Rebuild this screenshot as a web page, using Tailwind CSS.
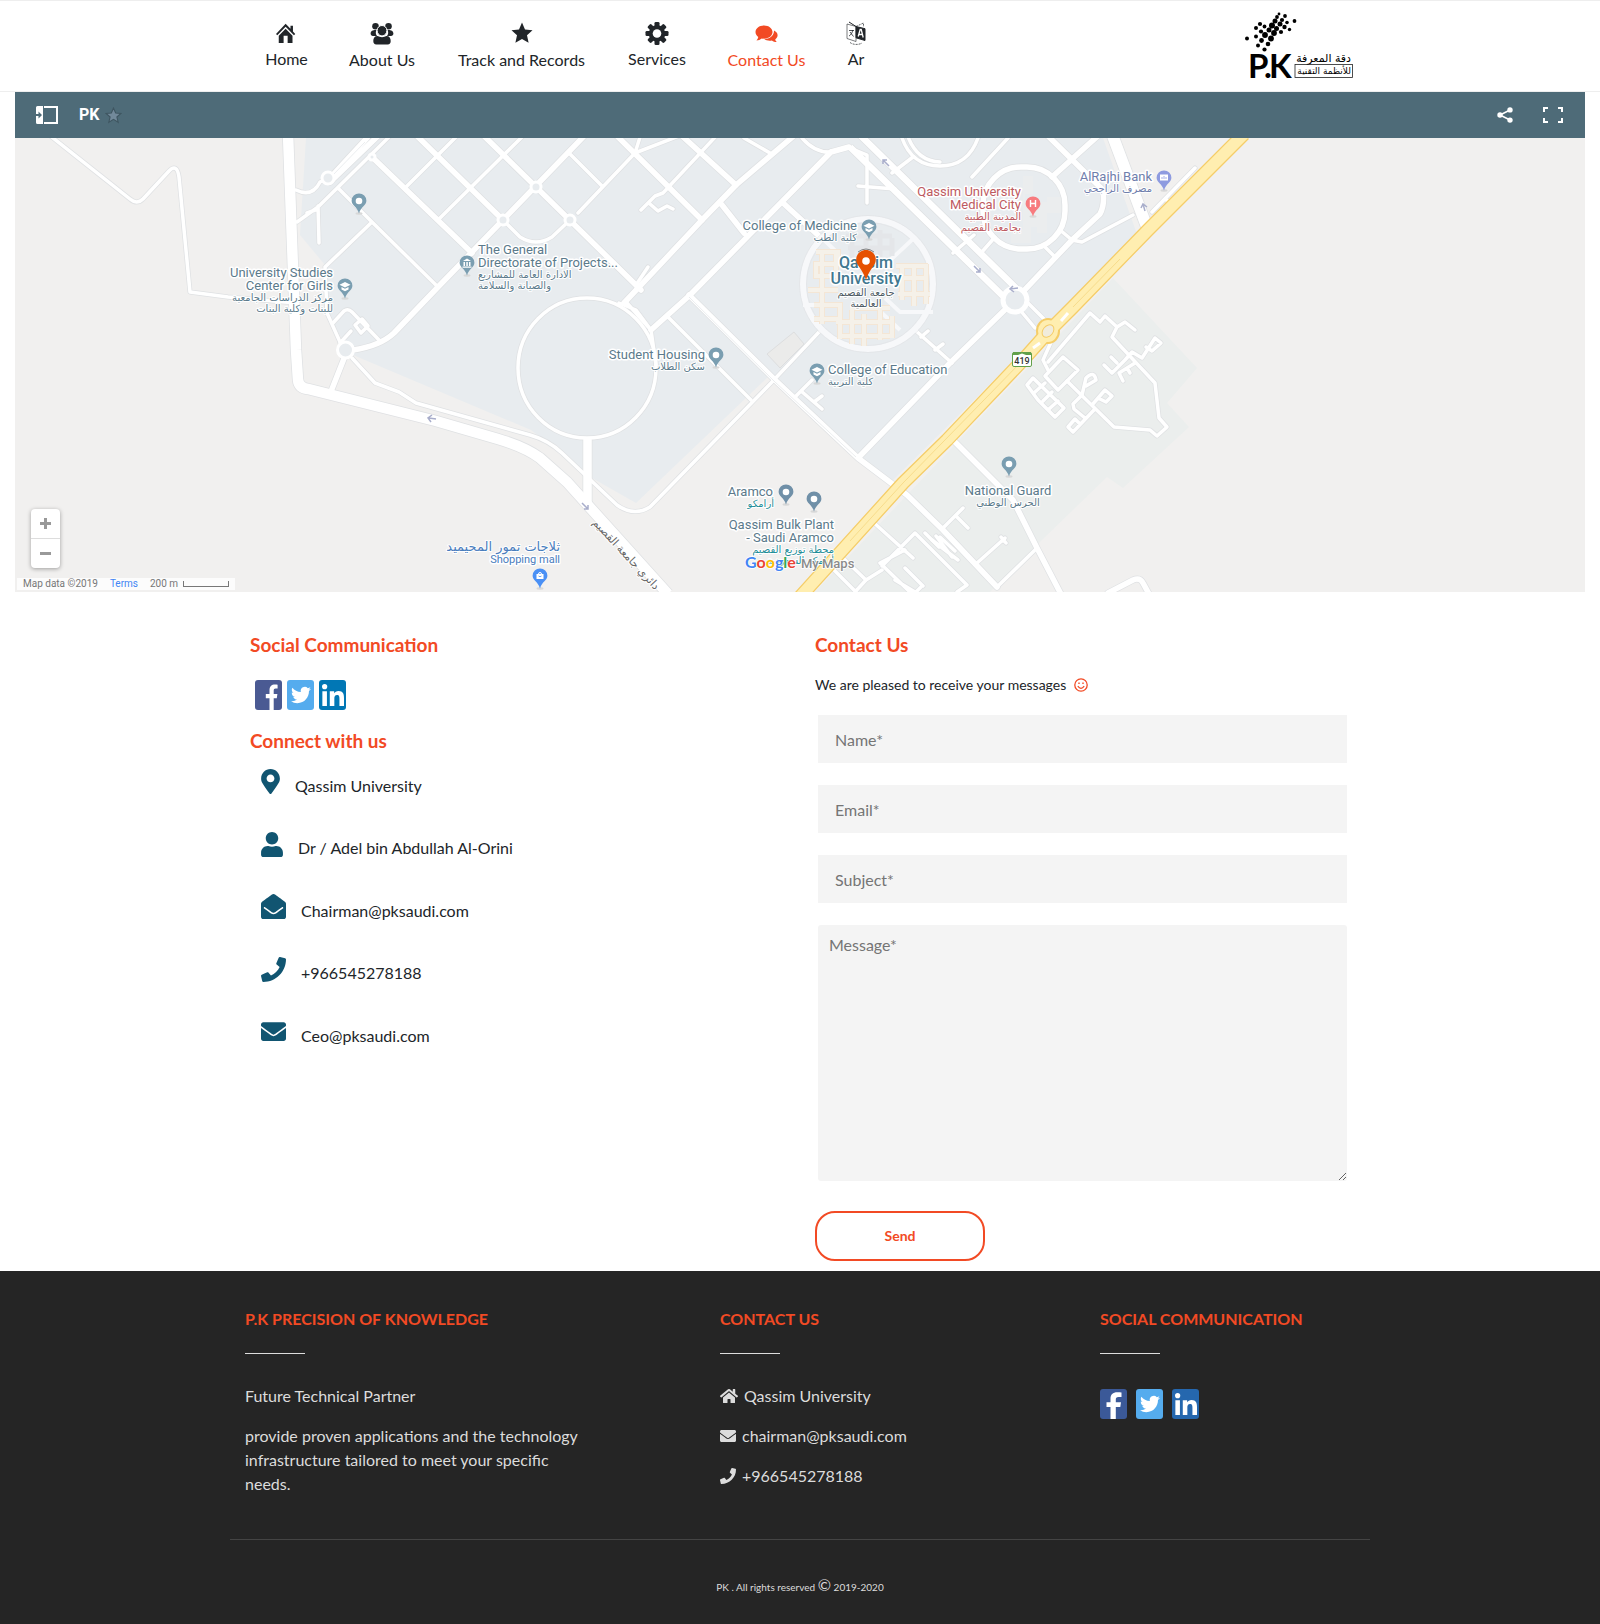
<!DOCTYPE html>
<html lang="en">
<head>
<meta charset="utf-8">
<meta name="viewport" content="width=device-width, initial-scale=1">
<title>PK - Contact Us</title>
<script src="https://cdn.jsdelivr.net/npm/@tailwindcss/browser@4"></script>
</head>
<body class="bg-white font-['Lato',sans-serif] text-base text-[#212529]">

<svg class="hidden" aria-hidden="true">
  <symbol id="i-envelope" viewBox="0 0 512 512"><path d="M502.3 190.8c3.9-3.1 9.7-.2 9.7 4.7V400c0 26.5-21.5 48-48 48H48c-26.5 0-48-21.5-48-48V195.6c0-5 5.7-7.8 9.7-4.7 22.4 17.4 52.1 39.5 154.1 113.6 21.1 15.4 56.7 47.8 92.2 47.6 35.7.3 72-32.8 92.3-47.6 102-74.1 131.6-96.3 154-113.7zM256 320c23.2.4 56.6-29.2 73.4-41.4 132.7-96.3 142.8-104.7 173.4-128.7 5.8-4.5 9.2-11.5 9.2-18.9v-19c0-26.5-21.5-48-48-48H48c-26.5 0-48 21.5-48 48v19c0 7.4 3.4 14.3 9.2 18.9 30.6 23.9 40.7 32.4 173.4 128.7 16.8 12.2 50.2 41.8 73.4 41.4z"/></symbol>
  <symbol id="i-phone" viewBox="0 0 512 512"><path d="M493.4 24.6l-104-24c-11.3-2.6-22.9 3.3-27.5 13.9l-48 112c-4.2 9.8-1.4 21.3 6.9 28l60.6 49.6c-36 76.7-98.9 140.5-177.2 177.2l-49.6-60.6c-6.8-8.3-18.2-11.1-28-6.9l-112 48C3.9 366.5-2 378.1.6 389.4l24 104C27.1 504.2 36.7 512 48 512c256.1 0 464-207.5 464-464 0-11.2-7.7-20.9-18.6-23.4z"/></symbol>
  <symbol id="i-fb" viewBox="0 0 27 30"><path d="M14.5 30V18.3h-3.7v-4.4h3.7v-3.6c0-3.9 2-5.8 5.6-5.8 1 0 1.900.1 2.500.2v3.900h-1.900c-1.500 0-2 .8-2 2v3.300h3.700l-.6 4.400h-3.100V30z"/></symbol>
  <symbol id="i-fb2" viewBox="0 0 27 30"><path d="M10.500 30V18h-4v-4.700h4v-3.500c0-4.300 2.300-6.500 6.800-6.500 1.700 0 3.200.1 4.200.3v4.300h-3c-2.200 0-2.700 1-2.700 2.700v2.700h5.200l-.7 4.700h-4.500V30z"/></symbol>
  <symbol id="i-tw" viewBox="0 0 24 24"><path d="M23.953 4.57a10 10 0 01-2.825.775 4.958 4.958 0 002.163-2.723c-.951.555-2.005.959-3.127 1.184a4.920 4.920 0 00-8.384 4.482C7.690 8.095 4.067 6.130 1.640 3.162a4.822 4.822 0 00-.666 2.475c0 1.710.870 3.213 2.188 4.096a4.904 4.904 0 01-2.228-.616v.060a4.923 4.923 0 003.946 4.827 4.996 4.996 0 01-2.212.085 4.936 4.936 0 004.604 3.417 9.867 9.867 0 01-6.102 2.105c-.390 0-.779-.023-1.170-.067a13.995 13.995 0 007.557 2.209c9.053 0 13.998-7.496 13.998-13.985 0-.210 0-.420-.015-.630A9.935 9.935 0 0024 4.590z"/></symbol>
  <symbol id="i-in" viewBox="0 0 448 448"><path d="M100.280 448H7.400V148.900h92.880zM53.790 108.100C24.090 108.100 0 83.500 0 53.800a53.790 53.790 0 0 1 107.580 0c0 29.700-24.100 54.300-53.790 54.300zM447.900 448h-92.680V302.400c0-34.700-.700-79.200-48.290-79.200-48.290 0-55.690 37.700-55.690 76.700V448h-92.780V148.900h89.080v40.800h1.300c12.400-23.500 42.690-48.300 87.880-48.300 94 0 111.280 61.900 111.280 142.300V448z"/></symbol>
  <symbol id="pin" viewBox="0 0 16 22"><ellipse cx="8" cy="20.500" rx="3.500" ry="1.200" fill="#d8d8d8"/><path d="M8 .5A7.300 7.300 0 0 0 .6 7.800C.6 12.500 6 13.500 8 20.500c2-7 7.400-8 7.400-12.700A7.300 7.300 0 0 0 8 .5z"/></symbol>
</svg>

<header class="border-y border-[#eee]">
  <div class="mx-auto flex h-[90px] max-w-[1140px] items-start justify-between pl-[15px] pr-[14px]">
    <nav aria-label="Main" class="flex pt-[20px] leading-6">
      <a href="#" class="flex min-w-[83px] flex-col items-center gap-[2px] px-5">
        <svg class="h-[24px] w-[22px]" viewBox="0 0 24 24" fill="currentColor"><path d="M10.500 2 0 13l1.400 1.500 9.100-9.300 9.100 9.300L21 13l-2.500-2.700V4h-2.700v3.400z"/><path d="M10.500 7.300 3 15v8h5.300v-8h4.400v8H18v-8z"/></svg>
        <span>Home</span></a>
      <a href="#" class="flex min-w-[108px] flex-col items-center gap-[2px] px-5">
        <svg class="h-[25px] w-[24px]" viewBox="0 0 24 25"><g fill="currentColor"><circle cx="5.500" cy="5.300" r="3.300"/><circle cx="18.500" cy="5.300" r="3.300"/><path d="M5.500 9C3 9 .6 10 .6 12.500c0 1.500.9 2.500 2.400 2.500h4C5.500 13 5.500 11 6.500 9zM18.500 9c2.500 0 4.900 1 4.900 3.500 0 1.500-.9 2.500-2.400 2.500h-4c1.500-2 1.500-4 .5-6z"/></g><path fill="currentColor" stroke="#fff" stroke-width="1" d="M12 4.500a4.900 4.900 0 0 0-4.900 5c0 2.600 2 5.500 4.900 5.500s4.900-2.900 4.900-5.500a4.900 4.900 0 0 0-4.900-5z"/><path fill="currentColor" d="M7.500 15C4.500 15 3.300 17 3.300 20c0 2 1 3.500 3 3.500h11.400c2 0 3-1.500 3-3.500 0-3-1.200-5-4.200-5-2.500 1.500-6.500 1.500-9 0z"/></svg>
        <span>About Us</span></a>
      <a href="#" class="flex min-w-[171px] flex-col items-center gap-[2px] px-5">
        <svg class="h-[25px] w-[22px]" viewBox="0 0 22 25" fill="currentColor"><path d="m11 1.500 3 7 7.500.8-5.500 5 1.600 7.500L11 18l-6.600 3.800L6 14.300l-5.500-5L8 8.500z"/></svg>
        <span>Track and Records</span></a>
      <a href="#" class="flex min-w-[100px] flex-col items-center gap-[2px] px-5">
        <svg class="h-[24px] w-[24px]" viewBox="0 0 24 24" fill="currentColor"><rect x="9.500" y="1" width="5" height="23" rx="1.300"/><rect x="9.500" y="1" width="5" height="23" rx="1.300" transform="rotate(45 12 12.500)"/><rect x="9.500" y="1" width="5" height="23" rx="1.300" transform="rotate(90 12 12.500)"/><rect x="9.500" y="1" width="5" height="23" rx="1.300" transform="rotate(135 12 12.500)"/><circle cx="12" cy="12.500" r="8.300"/><circle cx="12" cy="12.500" r="4.300" fill="#fff"/></svg>
        <span>Services</span></a>
      <a href="#" aria-current="page" class="flex min-w-[119px] flex-col items-center gap-[2px] px-5 text-[#f24a24]">
        <svg class="h-[25px] w-[23px]" viewBox="0 0 23 25" fill="currentColor"><path d="M9 4.500c4.900 0 8.500 2.900 8.500 6.600s-3.600 6.600-8.500 6.600c-.8 0-1.600-.1-2.300-.2-1.500 1.200-3.200 2-5.200 2 1-1 1.600-2.200 1.800-3.400C1.600 14.900.5 13.100.5 11.100.5 7.400 4.100 4.500 9 4.500z"/><path d="M19 9.500c2.200 1 3.600 2.700 3.600 4.800 0 1.700-1 3.100-2.400 4.100.2 1 .8 1.900 1.600 2.700-1.900 0-3.600-.6-4.900-1.600-3 .6-6-.1-7.600-1.500C14.500 18 19.200 14.500 19 9.500z"/></svg>
        <span>Contact Us</span></a>
      <a href="#" class="flex min-w-[57px] flex-col items-center gap-[2px] px-5">
        <svg class="h-[24px] w-[20px]" viewBox="0 0 20 24" fill="none" stroke="currentColor"><path d="m1 3 9 2.500v15L1 17.500z" stroke-width=".6"/><path d="M10 5.500 17.500 2v4M4 21.500c3 2.500 9 2.500 12 .5" stroke-width=".7" stroke-dasharray="2 1"/><path d="m10 5.500 9 2.200v11.800l-9-2.700z" fill="currentColor"/><path d="m3 1 7 4.500" stroke-width="1"/><path d="M3 9.500h5M6.700 9C6.500 11.500 5 14 3 15M4 11l3.500 4.500" stroke-width=".8"/><path d="m12.200 15.500 2-7h1l2 8M13 13.500h3.500" stroke="#fff" stroke-width="1.300"/></svg>
        <span>Ar</span></a>
    </nav>
    <a href="#" aria-label="PK home" class="mt-[10px] block">
      <svg class="h-[72px] w-[112px]" viewBox="1243 11 112 72" fill="#000">
        <g><circle cx="1278" cy="14" r="1.400"/><circle cx="1276" cy="17" r="1.900"/><circle cx="1284" cy="16" r="1.900"/><circle cx="1274" cy="21" r="2.500"/><circle cx="1281" cy="20" r="2.100"/><circle cx="1286" cy="22.500" r="1.800"/><circle cx="1293.500" cy="21" r="1.900"/><circle cx="1259" cy="24" r="2.100"/><circle cx="1271" cy="25.500" r="3"/><circle cx="1279" cy="24" r="2.500"/><circle cx="1263.500" cy="26.500" r="1.900"/><circle cx="1255" cy="28" r="2"/><circle cx="1268" cy="30" r="2.500"/><circle cx="1275.500" cy="28.500" r="2.500"/><circle cx="1283.500" cy="27" r="2.200"/><circle cx="1288.500" cy="29.500" r="1.700"/><circle cx="1260" cy="31.500" r="2.100"/><circle cx="1273" cy="33" r="2.900"/><circle cx="1280" cy="32" r="2.100"/><circle cx="1264" cy="35" r="2.900"/><circle cx="1255" cy="36.500" r="2"/><circle cx="1246" cy="38.500" r="2"/><circle cx="1270" cy="38.500" r="2.900"/><circle cx="1260.500" cy="40.500" r="2.400"/><circle cx="1267" cy="44" r="2.300"/><circle cx="1257" cy="45.500" r="2"/><circle cx="1263.500" cy="49.500" r="2.100"/></g>
        <text x="1247 1263 1268" y="78" font-family="Lato" font-weight="700" font-size="33">P.K</text>
        <text x="1350" y="62" text-anchor="end" font-family="DejaVu Sans, sans-serif" font-size="11">دقة المعرفة</text>
        <rect x="1294" y="64.500" width="57.500" height="13" fill="none" stroke="#222" stroke-width=".8"/>
        <text x="1350" y="74" text-anchor="end" font-family="DejaVu Sans, sans-serif" font-size="9">للأنظمة التقنية</text>
      </svg>
    </a>
  </div>
</header>

<main>
  <section aria-label="Map" class="mx-[15px]">
    <div class="flex h-[46px] items-center bg-[#4e6b78] pl-[21px] pr-[22px] text-white">
      <button type="button" aria-label="Show legend"><svg class="h-[18px] w-[22px]" viewBox="0 0 22 18"><path d="M0 1.500A1.500 1.500 0 0 1 1.500 0H7v18H1.500A1.500 1.500 0 0 1 0 16.500z" fill="#fff"/><path d="M0 8h2.500V5.500L6 9l-3.500 3.500V10H0z" fill="#4e6b78"/><path d="M8 1h13v16H8" fill="none" stroke="#fff" stroke-width="2"/></svg></button>
      <h1 class="ml-[21px] font-['Roboto',sans-serif] text-base font-bold">PK</h1>
      <svg class="ml-[6px] h-[17px] w-[17px]" viewBox="0 0 15 15"><path d="m7.500 1 1.900 4.300 4.600.4-3.500 3.100 1.100 4.600-4.100-2.500-4.100 2.500 1.100-4.600L1 5.700l4.600-.4z" fill="#72899a" stroke="#3f5661"/></svg>
      <button type="button" aria-label="Share" class="ml-auto"><svg class="h-[16px] w-[16px]" viewBox="0 0 16 16" fill="#fff"><path d="M13 3 3 8l10 5" fill="none" stroke="#fff" stroke-width="1.600"/><circle cx="13" cy="2.900" r="2.700"/><circle cx="3" cy="8" r="2.700"/><circle cx="13" cy="13.100" r="2.700"/></svg></button>
      <button type="button" aria-label="Full screen" class="ml-[30px]"><svg class="h-[16px] w-[20px]" viewBox="0 0 20 16" fill="none" stroke="#fff" stroke-width="2"><path d="M1 5V1h4M15 1h4v4M19 11v4h-4M5 15H1v-4"/></svg></button>
    </div>
    <div class="relative h-[454px] overflow-hidden bg-[#f1f0ef]">
      <svg class="block h-full w-full" viewBox="15 138 1570 454" preserveAspectRatio="xMidYMid slice" role="img" aria-label="Map of Qassim University">
        <path fill="#e8ecef" d="M306 138 300 235 325 265 330 320 353 355 531 430 592 478 636 503 768 377 782 383 890 483 960 414 1138 237 1103 138z"/>
        <path fill="#ebeeed" d="M1113 278 1197 368 1167 403 1189 427 1123 488 1107 477 1042 540 990 592H815z"/>
        <path fill="#ebebea" stroke="#dddedf" d="m767 354 27-22 10 12-24 24z"/>
        <defs>
          <g id="minor" fill="none" stroke-linejoin="round" stroke-linecap="round">
            <path d="M48 134 130 199Q137 205 143 199L169 171Q177 163 179 177L190 292 228 297 296 303"/>
            <path d="M392 134 318 207 297 222M318 206 319 243M307 213 318 209M296 190Q312 198 320 182L328 178M338 188 372 222 438 287M372 222 325 267 327 313 340 342"/>
            <path d="M333 323 344 311Q348 308 352 312L380 341M355 325 362 319 368 326 361 333zM340 343 351 331"/>
            <path d="M459 134 406 187M525 134 438 220M570 154 602 186M641 134 635 153M635 153 578 213M744 138 770 153M684 134 635 153"/>
            <path d="M718 134 663 193 655 196 641 210M650 204 658 211 667 206 673 209"/>
            <path d="M503 220 520 237Q536 247 552 237L570 220M802 138Q815 153 831 152L849 147"/>
            <path d="M352 358 375 383 399 392 416 403 530 435Q548 440 562 453L617 505Q634 517 650 507L771 383 819 332"/>
            <ellipse cx="587" cy="368" rx="69" ry="70"/>
            <path d="M619 303 636 310 651 330 656 365M627 303 651 330M636 285 648 267M668 317 751 400"/>
            <path d="M794 398 812 380M801 391 822 409M814 402 822 396M867 203V155L850 148M858 186 895 189M892 173 913 157"/>
            <path d="M1008 138 972 177M1082 242 1133 215M1072 240 1082 242M1060 230 1072 240M1045 247 1055 257M995 237 981 253"/>
            <path d="M1152 212 1195 168M1165 199 1172 204M1020 310 1035 328M1028 303 1047 322M915 330 952 363M921 337 928 331M935 350 943 344M953 253 974 235"/>
            <path d="M902 138Q912 166 940 166T978 138M907 134Q916 161 940 162"/>
            <path d="M1048 362 1090 313 1100 322 1105 316 1117 327 1112 337 1155 383 1159 418 1167 427 1157 436 1150 430 1114 427 1067 381M1117 327 1125 322 1135 330M1052 340 1043 360 1048 370"/>
            <path d="M1063 357 1078 370 1058 390 1045 376zM1033 378 1027 385 1038 400 1055 417 1064 408zM1035 392 1045 383M1043 401 1052 392M1049 409 1058 401M1058 390 1067 381M1082 395 1073 404 1074 409 1085 418M1082 395 1086 378Q1094 370 1096 380L1086 386M1092 405 1105 390 1112 396 1106 402 1098 398M1094 410 1073 432 1068 427 1075 419 1080 424"/>
            <path d="M1125 360 1132 352 1142 358 1155 338 1161 343 1152 351 1146 347M1125 360 1112 373 1104 365M1111 357 1117 363M1135 363 1119 373 1123 381M1127 368 1130 373"/>
            <path d="M943 528 963 508M957 517 968 528M977 563 1005 538 1003 541M1001 537 1006 543M997 587 1037 548M932 540 958 560M936 536 952 557M940 537 955 551M915 533 967 585 957 592M915 533 882 566M873 522 913 558M905 550 880 563 910 592M895 580 915 592M905 568 923 586M921 587 910 598"/>
            <path d="M829 565 856 592M842 557 866 580 855 592M866 580 882 570M939 547 925 533"/>
          </g>
          <g id="major" fill="none" stroke-linejoin="round" stroke-linecap="round">
            <path d="M415 134 503 220M372 157 472 253M482 134 641 290M615 134 702 220M680 134 736 185M367 138 330 178M380 134 330 182"/>
            <path d="M586 134 503 220 438 287 394 333Q380 346 353 350M796 134 736 185 702 220 624 303M831 152 690 295 651 330M722 205 744 233M782 202 819 236M849 147 831 152"/>
            <path d="M345 356 330 394M589 440 589 505M586 440 586 500M689 295 775 380 858 458 907 495 943 530 997 587M858 458 950 363 1015 300M1015 300 1072 240 1100 214Q1105 205 1103 190L1046 134M1052 177 1100 134"/>
            <path d="M953 440 1013 500 1037 548 1062 596M1108 593 1133 580Q1140 577 1143 583L1149 594"/>
            <rect x="983" y="167" width="82" height="82" rx="38"/>
          </g>
          <g id="trunk" fill="none" stroke-linejoin="round">
            <path d="M850 147 1007 300M859 134 1019 291"/>
          </g>
        </defs>
        <g fill="#ebedee"><path d="M1015 176h18v18h-8v8h22v-5h14v16h-14v20h-10v-6h-6v16h-20v-14h12v-53h-8z"/></g>
        <use href="#minor" stroke="#dfe1e3" stroke-width="5"/><use href="#major" stroke="#dfe1e3" stroke-width="7"/><use href="#trunk" stroke="#dfe1e3" stroke-width="8"/>
        <path d="M288 134 296 350 298 380Q299 388 308 389L436 421 498 439Q525 447 540 458L567 482 668 594" fill="none" stroke="#dfe1e3" stroke-width="12"/>
        <path d="M1112 134 1148 230" stroke="#dfe1e3" stroke-width="13"/>
        <use href="#minor" stroke="#fff" stroke-width="3.500"/><use href="#major" stroke="#fff" stroke-width="5.500"/><use href="#trunk" stroke="#fff" stroke-width="6.500"/>
        <path d="M288 134 296 350 298 380Q299 388 308 389L436 421 498 439Q525 447 540 458L567 482 668 594" fill="none" stroke="#fff" stroke-width="10.500"/>
        <path d="M1112 134 1148 230" stroke="#fff" stroke-width="11.500"/>
        <path d="M365 142 332 176M689 297 775 382 856 457" fill="none" stroke="#e3e5e8" stroke-width=".7"/>
        <g fill="#e8ecef" stroke="#fff" stroke-width="3"><circle cx="345.500" cy="350" r="8"/><circle cx="328" cy="178" r="6"/><circle cx="503" cy="220" r="5"/><circle cx="536" cy="187" r="5"/><circle cx="570" cy="220" r="5"/><circle cx="372" cy="157" r="3"/><circle cx="1015" cy="300" r="12" stroke-width="5"/></g>

        <circle cx="868" cy="284" r="65" fill="none" stroke="#f7f8fa" stroke-width="6"/>
        <circle cx="868" cy="284" r="68.500" fill="none" stroke="#e2e4e7" stroke-width=".7"/>
        <circle cx="868" cy="284" r="61.500" fill="none" stroke="#e2e4e7" stroke-width=".7"/>
        <path d="M820 236 850 265M914 238 885 265M900 330 868 300M803 305H825M933 312H900L885 298" stroke="#f7f8fa" stroke-width="4" fill="none"/>
        <g fill="none" stroke="#f4e6d5" stroke-width="6"><path id="blocks" d="M816 252h22v12h-22v12h22M822 250v74M836 250v24M808 290h30M814 305h26v14h-26M814 319h22M840 315v24M852 310v34M864 314v32M880 310v30M836 322h56M842 336h48M892 316v22M896 266h32M898 278h30M898 294h32M902 264v36M914 264v42M926 264v40M850 308h40"/></g>
        <g fill="none" stroke="#f5f1e9" stroke-width="4"><use href="#blocks"/></g>
        <path d="M846 236h46M848 248h44M852 230v28M866 236v16M880 230v28M892 238v18" stroke="#e4e6e9" stroke-width="5" fill="none"/>

        <g fill="none" stroke-linejoin="round">
          <path d="M1244 134 1148 230 1073 307 1048 332 1023 360 947 440 903 483 800 597" stroke="#f5cd68" stroke-width="14"/>
          <ellipse cx="1048" cy="331" rx="12" ry="13" fill="#f5cd68"/>
          <path d="M1244 134 1148 230 1073 307 1048 332 1023 360 947 440 903 483 800 597" stroke="#ffeeb0" stroke-width="11.500"/>
          <ellipse cx="1048" cy="331" rx="10" ry="11" fill="#ffeeb0"/>
          <ellipse cx="1048" cy="331" rx="5" ry="7" fill="#f1ecdc" stroke="#f5cd68" transform="rotate(40 1048 331)"/>
          <path d="M1120 259 1073 307M1023 360 903 483 850 541" stroke="#f7dc8c"/>
          <path d="m1061 321 7-8M1033 348l7-5" stroke="#fff" stroke-width="3"/>
        </g>
        <g fill="none" stroke="#a9aecb" stroke-width="1.500"><path d="m436 419-7-1m3-3-4 3 3 4M582 503l6 6m0-4v4h-4M889 166l-6-6m0 4v-4h4M974 266l6 6m0-4v4h-4M1018 288l-8 1m3-3-3 3 4 3M1145 211l-2-7m-2 4 2-4 4 3"/></g>
        <g><rect x="1012.500" y="352.500" width="19" height="14" rx="1.500" fill="#fff" stroke="#62a04a"/><path d="M1013 352h18v3h-5l-4-1.500-4 1.500h-5z" fill="#62a04a"/><text x="1022" y="364" text-anchor="middle" font-family="Roboto" font-size="9" font-weight="500" fill="#333">419</text></g>

        <g fill="#7a9eb1">
          <use href="#pin" x="351" y="193" width="16" height="22"/><use href="#pin" x="337" y="278" width="16" height="22"/><use href="#pin" x="459" y="255" width="16" height="22"/><use href="#pin" x="861" y="219" width="16" height="22"/><use href="#pin" x="708" y="347" width="16" height="22"/><use href="#pin" x="809" y="363" width="16" height="22"/><use href="#pin" x="1001" y="456" width="16" height="22"/>
          <g fill="#7090a8"><use href="#pin" x="778" y="484" width="16" height="22"/><use href="#pin" x="806" y="491" width="16" height="22"/></g>
          <use href="#pin" x="532" y="568" width="16" height="22" fill="#4a90f5"/><use href="#pin" x="1025" y="196" width="16" height="22" fill="#f77b7f"/><use href="#pin" x="1156" y="170" width="16" height="22" fill="#8e9be0"/>
        </g>
        <g fill="#fff">
          <circle cx="359" cy="201" r="3.300"/><circle cx="716" cy="355" r="3.300"/><circle cx="1009" cy="464" r="3.300"/><circle cx="786" cy="492" r="3.300"/><circle cx="814" cy="499" r="3.300"/>
          <path id="cap" d="m345 282 5.500 2.800-5.500 2.800-5.500-2.800zM341.500 287l3.500 1.800 3.500-1.800v2.500l-3.500 1.800-3.500-1.800z"/><use href="#cap" x="524" y="-59"/><use href="#cap" x="472" y="85"/>
          <path d="M463 261l4-2.500 4 2.500zM463.500 262h1.500v4h-1.500zM466.300 262h1.500v4h-1.500zM469 262h1.500v4H469zM462.500 266.500h9v1.200h-9z"/>
          <path d="M536.500 574h7v5h-7z"/><path d="M538.500 574a1.500 1.500 0 0 1 3 0" fill="none" stroke="#fff" stroke-width="1"/><path d="M538.500 576q1.500 1.500 3 0" fill="none" stroke="#4a90f5" stroke-width=".8"/>
          <path d="M1160 174.500h8v6h-8z"/><path d="M1162 179v-2M1164 179v-3M1166 179v-2" stroke="#8e9be0" stroke-width=".8"/>
          <path d="M1030.500 200v7M1035.500 200v7M1030.500 203.500h5" stroke="#fff" stroke-width="1.400"/>
        </g>

        <g font-family="Roboto, sans-serif" font-size="13" fill="#5b7a8b" stroke="#fff" stroke-width="3" stroke-linejoin="round" paint-order="stroke">
          <text x="333" y="277" text-anchor="end">University Studies</text><text x="333" y="290" text-anchor="end">Center for Girls</text>
          <text x="478" y="254">The General</text><text x="478" y="267">Directorate of Projects...</text>
          <text x="857" y="230" text-anchor="end">College of Medicine</text>
          <text x="705" y="359" text-anchor="end">Student Housing</text>
          <text x="828" y="374">College of Education</text>
          <text x="1008" y="495" text-anchor="middle">National Guard</text>
          <text x="773" y="496" text-anchor="end">Aramco</text>
          <text x="834" y="529" text-anchor="end">Qassim Bulk Plant</text><text x="834" y="542" text-anchor="end">- Saudi Aramco</text>
          <text x="560" y="563" text-anchor="end" font-size="11" fill="#4a7dbd">Shopping mall</text>
          <g fill="#bd5a61"><text x="1021" y="196" text-anchor="end">Qassim University</text><text x="1021" y="209" text-anchor="end">Medical City</text></g>
          <text x="1152" y="181" text-anchor="end" fill="#6f7eac">AlRajhi Bank</text>
          <g font-size="16" font-weight="500" fill="#41788f" text-anchor="middle"><text x="866" y="268">Qassim</text><text x="866" y="284">University</text></g>
        </g>
        <g font-family="DejaVu Sans, sans-serif" font-size="10" fill="#5b7a8b" stroke="#fff" stroke-width="2" stroke-linejoin="round" paint-order="stroke">
          <text x="333" y="301" text-anchor="end">مركز الدراسات الجامعية</text><text x="333" y="312" text-anchor="end">للبنات وكلية البنات</text>
          <text x="478" y="278">الادارة العامة للمشاريع</text><text x="478" y="289">والصيانة والسلامة</text>
          <text x="857" y="241" text-anchor="end">كلية الطب</text><text x="705" y="370" text-anchor="end">سكن الطلاب</text><text x="828" y="385">كلية التربية</text>
          <text x="1008" y="506" text-anchor="middle">الحرس الوطني</text>
          <text x="774" y="507" text-anchor="end" fill="#1f8e98">أرامكو</text><text x="834" y="553" text-anchor="end" fill="#1f8e98">محطة توزيع القصيم</text><text x="834" y="564" text-anchor="end" fill="#1f8e98">أرامكو السعودية</text>
          <text x="560" y="551" text-anchor="end" font-size="13" fill="#4a7dbd">ثلاجات تمور المحيميد</text>
          <g fill="#bd5a61"><text x="1021" y="220" text-anchor="end">المدينة الطبية</text><text x="1021" y="231" text-anchor="end">بجامعة القصيم</text></g>
          <text x="1152" y="192" text-anchor="end" fill="#6f7eac">مصرف الراجحي</text>
          <g fill="#4c5a63" text-anchor="middle"><text x="866" y="296">جامعة القصيم</text><text x="866" y="307">العالمية</text></g>
          <text x="592" y="523" transform="rotate(47 592 523)" font-size="11" fill="#666">دائري جامعة القصيم</text>
        </g>
        <path d="M866 250c-5.500 0-9.800 4.300-9.800 9.600 0 6.400 5.800 8.400 9.800 20.400 4-12 9.800-14 9.800-20.400 0-5.300-4.300-9.600-9.800-9.600z" fill="#e65100"/><circle cx="866" cy="261" r="3.800" fill="#fff"/><path d="M858 252q8-6 16 0" fill="none" stroke="#555" stroke-width=".7"/>
        <text x="745" y="568" font-family="Lato, sans-serif" font-size="16" font-weight="700" stroke="#fff" stroke-width="1.500" paint-order="stroke" fill="#4285f4">G<tspan fill="#ea4335">o</tspan><tspan fill="#fbbc05">o</tspan><tspan fill="#4285f4">g</tspan><tspan fill="#34a853">l</tspan><tspan fill="#ea4335">e</tspan></text>
        <text x="801" y="568" font-family="Roboto, sans-serif" font-size="13" font-weight="500" fill="#8b8b8b" stroke="#fff" stroke-width="1.500" paint-order="stroke">My Maps</text>
      </svg>
      <div class="absolute bottom-[24px] left-[16px] flex w-[29px] flex-col rounded-sm bg-white shadow-[0_1px_4px_rgba(0,0,0,0.35)]">
        <button type="button" aria-label="Zoom in" class="flex h-[30px] items-center justify-center border-b border-[#ddd]"><svg class="h-[11px] w-[11px]" viewBox="0 0 11 11"><path d="M4 0h3v4h4v3H7v4H4V7H0V4h4z" fill="#999"/></svg></button>
        <button type="button" aria-label="Zoom out" class="flex h-[29px] items-center justify-center"><svg class="h-[11px] w-[11px]" viewBox="0 0 11 11"><path d="M0 4h11v3H0z" fill="#999"/></svg></button>
      </div>
      <div class="absolute bottom-[2px] left-[2px] flex h-[12px] items-center gap-3 bg-white/80 px-1.5 font-['Roboto',sans-serif] text-[10px] leading-3 text-[#777]">
        <span>Map data ©2019</span><a href="#" class="text-[#4285f4]">Terms</a><span class="flex items-center gap-[5px]">200 m <span class="h-[6px] w-[46px] border border-t-0 border-[#777]"></span></span>
      </div>
    </div>
  </section>

  <div class="mx-auto grid max-w-[1130px] grid-cols-2 pb-[10px] pt-[41px]">
    <section class="px-[15px]">
      <h2 class="text-[19px] font-bold leading-6 text-[#f24a24]">Social Communication</h2>
      <div class="ml-[5px] mt-[23px] flex gap-[5px]">
        <a href="#" aria-label="Facebook" class="h-[30px] w-[27px] rounded-[3px] bg-[#4a5a93]"><svg class="h-full w-full" fill="#fff"><use href="#i-fb"/></svg></a>
        <a href="#" aria-label="Twitter" class="flex h-[30px] w-[27px] items-center justify-center rounded-[3px] bg-[#55acee]"><svg class="h-[20px] w-[20px]" fill="#fff"><use href="#i-tw"/></svg></a>
        <a href="#" aria-label="LinkedIn" class="flex h-[30px] w-[27px] items-center justify-center rounded-[3px] bg-[#0177b5]"><svg class="h-[22px] w-[22px]" fill="#fff"><use href="#i-in"/></svg></a>
      </div>
      <h2 class="mt-[19px] text-[19px] font-bold leading-6 text-[#f24a24]">Connect with us</h2>
      <ul class="ml-[11px] mt-[1px] text-[#212529]">
        <li class="flex h-[63px] items-center gap-[15px]"><svg class="mb-2 h-[25px] w-[19px]" viewBox="0 0 384 512" fill="#115571"><path d="M172.268 501.670C26.970 291.031 0 269.413 0 192 0 85.961 85.961 0 192 0s192 85.961 192 192c0 77.413-26.970 99.031-172.268 309.670-9.535 13.774-29.930 13.773-39.464 0zM192 272c44.183 0 80-35.817 80-80s-35.817-80-80-80-80 35.817-80 80 35.817 80 80 80z"/></svg>Qassim University</li>
        <li class="flex h-[62px] items-center gap-[15px]"><svg class="mb-2 h-[25px] w-[22px]" viewBox="0 0 448 512" fill="#115571"><path d="M224 256c70.700 0 128-57.300 128-128S294.700 0 224 0 96 57.300 96 128s57.300 128 128 128zm89.600 32h-16.700c-22.200 10.200-46.900 16-72.900 16s-50.600-5.800-72.900-16h-16.700C60.200 288 0 348.200 0 422.400V464c0 26.500 21.500 48 48 48h352c26.500 0 48-21.500 48-48v-41.600c0-74.200-60.200-134.400-134.400-134.400z"/></svg>Dr / Adel bin Abdullah Al-Orini</li>
        <li class="flex h-[63px] items-center gap-[15px]"><svg class="mb-2 h-[25px] w-[25px]" viewBox="0 0 512 512" fill="#115571"><path d="M512 464c0 26.510-21.490 48-48 48H48c-26.510 0-48-21.490-48-48V200.724a48 48 0 0 1 18.387-37.776c24.913-19.529 45.501-35.365 164.200-121.511C199.412 29.170 232.797-.347 256 .003c23.198-.354 56.596 29.172 73.413 41.433 118.687 86.137 139.303 101.995 164.200 121.512A48 48 0 0 1 512 200.724V464zm-65.666-196.605c-2.563-3.728-7.700-4.595-11.339-1.907-22.845 16.873-55.462 40.705-105.582 77.079-16.825 12.266-50.210 41.781-73.413 41.430-23.211.344-56.559-29.143-73.413-41.430-50.114-36.370-82.734-60.204-105.582-77.079-3.639-2.688-8.776-1.821-11.339 1.907l-9.072 13.196a7.998 7.998 0 0 0 1.839 10.967c22.887 16.899 55.454 40.690 105.303 76.868 20.274 14.781 56.524 47.813 92.264 47.573 35.724.242 71.961-32.771 92.263-47.573 49.850-36.179 82.418-59.970 105.303-76.868a7.998 7.998 0 0 0 1.839-10.967l-9.071-13.196z"/></svg>Chairman@pksaudi.com</li>
        <li class="flex h-[62px] items-center gap-[15px]"><svg class="mb-2 h-[25px] w-[25px]" fill="#115571"><use href="#i-phone"/></svg>+966545278188</li>
        <li class="flex h-[63px] items-center gap-[15px]"><svg class="mb-2 h-[25px] w-[25px]" fill="#115571"><use href="#i-envelope"/></svg>Ceo@pksaudi.com</li>
      </ul>
    </section>

    <section class="px-[15px]">
      <h2 class="text-[19px] font-bold leading-6 text-[#f24a24]">Contact Us</h2>
      <p class="mt-[18px] flex items-center gap-2 text-sm leading-5">We are pleased to receive your messages
        <svg class="h-[14px] w-[14px]" viewBox="0 0 14 14" fill="none" stroke="#f24a24" stroke-width="1.300"><circle cx="7" cy="7" r="6.200"/><path d="M3.800 8.200Q7 12.500 10.200 8.200"/><path d="M4.300 5.300h1.400M8.300 5.300h1.400" stroke-width="1.600"/></svg></p>
      <form class="mt-5 flex flex-col">
        <div class="mx-[3px] flex flex-col gap-[22px]">
          <input type="text" aria-label="Name" placeholder="Name*" class="block h-[48px] w-full bg-[#f4f4f4] px-[17px] placeholder:text-[#757575]">
          <input type="email" aria-label="Email" placeholder="Email*" class="block h-[48px] w-full bg-[#f4f4f4] px-[17px] placeholder:text-[#757575]">
          <input type="text" aria-label="Subject" placeholder="Subject*" class="block h-[48px] w-full bg-[#f4f4f4] px-[17px] placeholder:text-[#757575]">
          <textarea aria-label="Message" placeholder="Message*" class="block h-[256px] w-full resize rounded-[3px] bg-[#f4f4f4] px-[11px] py-2 placeholder:text-[#757575]"></textarea>
        </div>
        <button type="submit" class="mt-[30px] h-[50px] w-[170px] rounded-[20px] border-2 border-[#f24a24] bg-white text-sm font-bold text-[#f24a24]">Send</button>
      </form>
    </section>
  </div>
</main>

<footer class="bg-[#252525] text-[#dcdcdc]">
  <div class="mx-auto max-w-[1140px]">
    <div class="grid h-[268px] grid-cols-12 pt-[36px] leading-6">
      <section class="col-span-5 px-[15px]">
        <h3 class="font-bold text-[#f24a24]">P.K PRECISION OF KNOWLEDGE</h3>
        <div class="mt-[22px] w-[60px] border-t border-[#ddd]"></div>
        <p class="mt-[30px]">Future Technical Partner</p>
        <p class="mt-4 max-w-[350px]">provide proven applications and the technology infrastructure tailored to meet your specific needs.</p>
      </section>
      <section class="col-span-4 px-[15px]">
        <h3 class="font-bold text-[#f24a24]">CONTACT US</h3>
        <div class="mt-[22px] w-[60px] border-t border-[#ddd]"></div>
        <ul class="mt-[30px] flex flex-col gap-4">
          <li class="flex items-center gap-1.5"><svg class="h-[16px] w-[18px]" viewBox="0 0 576 512" fill="currentColor"><path d="M280.370 148.260L96 300.110V464a16 16 0 0 0 16 16l112.060-.290a16 16 0 0 0 15.920-16V368a16 16 0 0 1 16-16h64a16 16 0 0 1 16 16v95.640a16 16 0 0 0 16 16.050L464 480a16 16 0 0 0 16-16V300L295.670 148.260a12.190 12.190 0 0 0-15.300 0zM571.600 251.470L488 182.560V44.050a12 12 0 0 0-12-12h-56a12 12 0 0 0-12 12v72.610L318.470 43a48 48 0 0 0-61 0L4.340 251.470a12 12 0 0 0-1.600 16.900l25.500 31A12 12 0 0 0 45.150 301l235.220-193.740a12.190 12.190 0 0 1 15.300 0L530.900 301a12 12 0 0 0 16.900-1.600l25.500-31a12 12 0 0 0-1.700-16.930z"/></svg>Qassim University</li>
          <li class="flex items-center gap-1.5"><svg class="h-[16px] w-[16px]" fill="currentColor"><use href="#i-envelope"/></svg>chairman@pksaudi.com</li>
          <li class="flex items-center gap-1.5"><svg class="h-[16px] w-[16px]" fill="currentColor"><use href="#i-phone"/></svg>+966545278188</li>
        </ul>
      </section>
      <section class="col-span-3 px-[15px]">
        <h3 class="font-bold text-[#f24a24]">SOCIAL COMMUNICATION</h3>
        <div class="mt-[22px] w-[60px] border-t border-[#ddd]"></div>
        <div class="mt-[35px] flex gap-[9px]">
          <a href="#" aria-label="Facebook" class="h-[30px] w-[27px] rounded-[3px] bg-[#3b5998]"><svg class="h-full w-full" fill="#fff"><use href="#i-fb2"/></svg></a>
          <a href="#" aria-label="Twitter" class="flex h-[30px] w-[27px] items-center justify-center rounded-[3px] bg-[#55acee]"><svg class="h-[20px] w-[20px]" fill="#fff"><use href="#i-tw"/></svg></a>
          <a href="#" aria-label="LinkedIn" class="flex h-[30px] w-[27px] items-center justify-center rounded-[3px] bg-[#2567ae]"><svg class="h-[22px] w-[22px]" fill="#fff"><use href="#i-in"/></svg></a>
        </div>
      </section>
    </div>
    <p class="border-t border-[#444] pb-[25px] pt-[33px] text-center text-[10px] leading-6">PK . All rights reserved <span class="text-base leading-6">©</span> 2019-2020</p>
  </div>
</footer>
</body>
</html>
